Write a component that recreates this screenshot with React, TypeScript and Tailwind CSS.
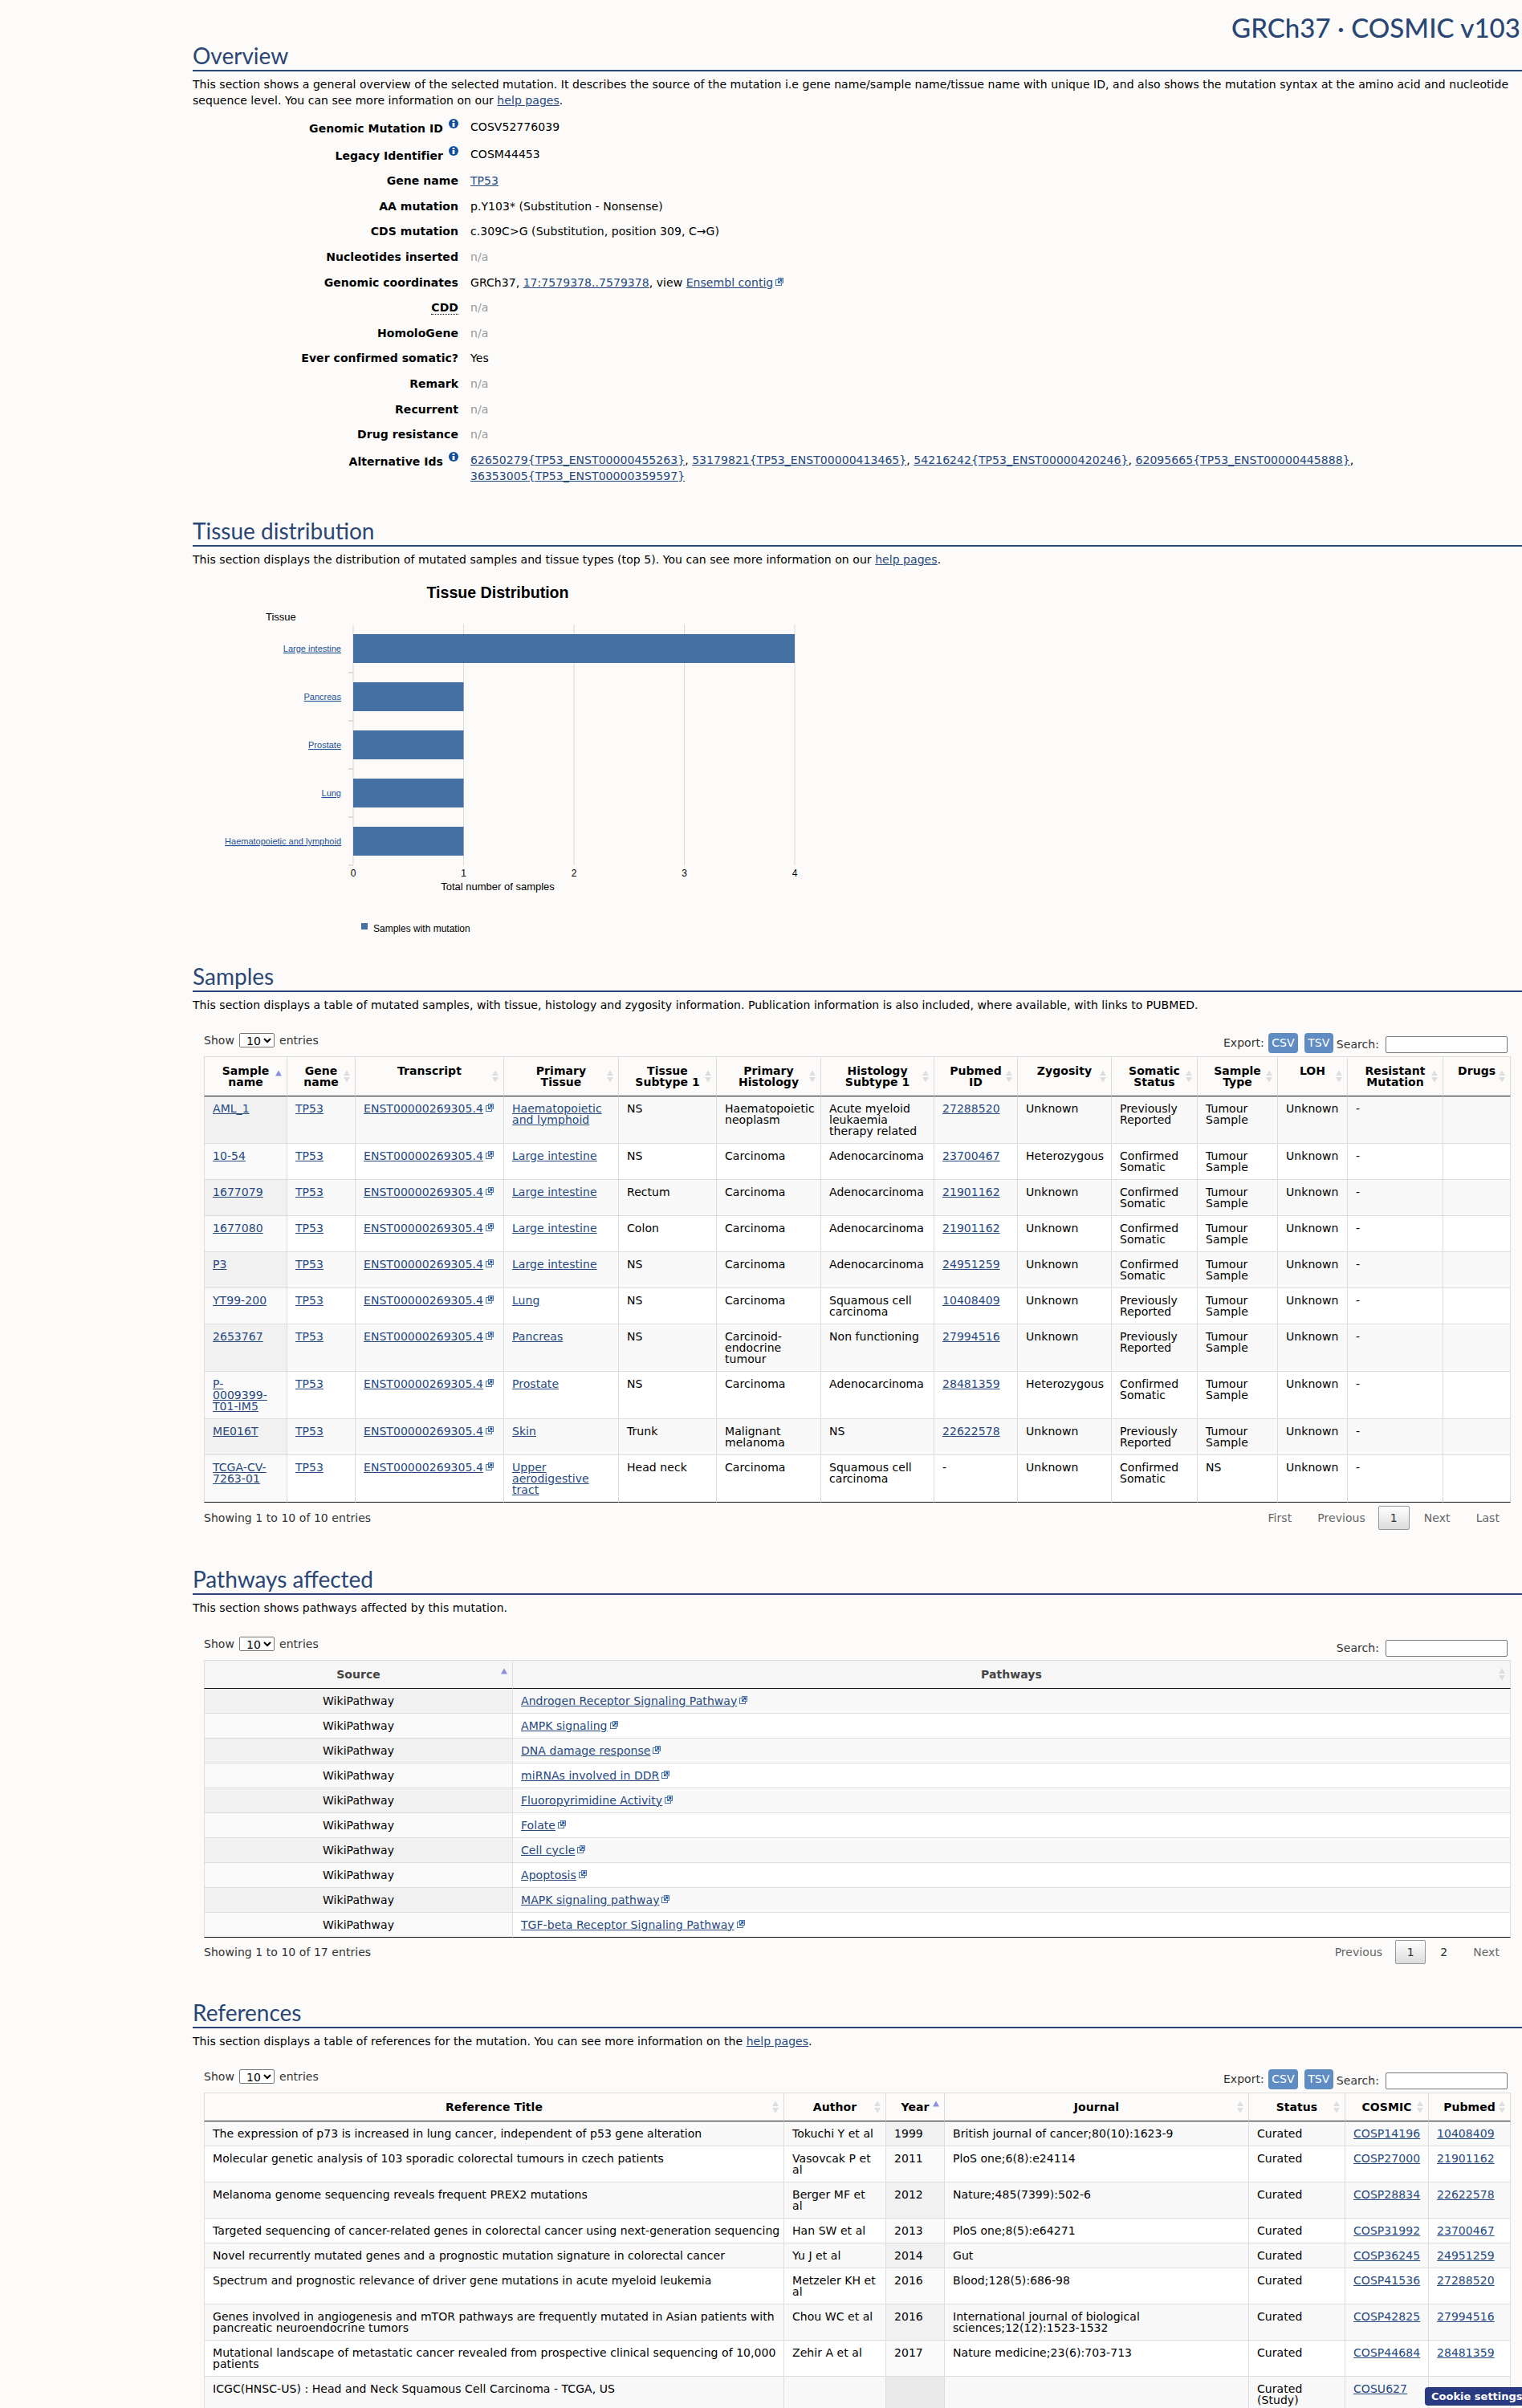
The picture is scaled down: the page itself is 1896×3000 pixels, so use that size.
import React from 'react';

// Small reusable bits
const ExtLink = () => (
  <svg viewBox="0 0 10 10" className="relative -top-[2px] ml-[3px] inline-block h-[10px] w-[10px]" fill="none">
    <rect x="0.5" y="2.5" width="7" height="7" fill="#fff" stroke="#4a76ad" />
    <rect x="3.5" y="0.5" width="6" height="6" fill="#fff" stroke="#4a76ad" />
    <path d="M3.5 6.5L7 3M4.8 2.2H7.8V5.2" stroke="#1d4f94" strokeWidth="1.2" />
  </svg>
);

const InfoIcon = () => (
  <svg viewBox="0 0 12 12" className="ml-[7px] inline-block h-[12px] w-[12px] align-[5px]">
    <circle cx="6" cy="6" r="6" fill="#0d4f9e" />
    <rect x="4.6" y="2" width="2.8" height="2" fill="#fff" />
    <rect x="4.6" y="5" width="2.8" height="5" fill="#fff" />
  </svg>
);

const A = ({ children }: { children: React.ReactNode }) => (
  <a href="#" className="text-[#26497f] underline">{children}</a>
);

const SortIcon = ({ sorted }: { sorted?: boolean }) => (
  <svg viewBox="0 0 8 15" className="absolute right-[6px] top-1/2 h-[15px] w-[8px] -translate-y-1/2">
    {sorted ? (
      <path d="M4 0L8 7H0Z" fill="#8b8fe3" />
    ) : (
      <>
        <path d="M4 0L8 6.5H0Z" fill="#dedede" />
        <path d="M4 15L8 8.5H0Z" fill="#dedede" />
      </>
    )}
  </svg>
);

const SectionTitle = ({ title }: { title: string }) => (
  <h2 className="h-[40px] border-b-2 border-[#2a4674] font-['Lato'] text-[28px] leading-[40px] tracking-normal text-[#2a4674]">{title}</h2>
);

const Export = () => (
  <>
    <span>Export:</span>
    <span className="ml-[5px] h-[25px] w-[37px] rounded-[4px] bg-[#5f8cc2] text-center leading-[25px] text-white">CSV</span>
    <span className="ml-[8px] h-[25px] w-[36px] rounded-[4px] bg-[#5f8cc2] text-center leading-[25px] text-white">TSV</span>
  </>
);

const Controls = ({ exportBtns, mt }: { exportBtns?: boolean; mt: string }) => (
  <div className={`${mt} ml-[14px] flex h-[29px] w-[1628px] justify-between text-[#333]`}>
    <div className="flex h-[18px] items-center">
      Show
      <select className="mx-[6px] h-[18px] w-[44px] rounded-[2px] border border-[#767676] bg-white pl-[4px] text-[14px] text-black">
        <option>10</option>
      </select>
      entries
    </div>
    <div className="flex h-[25px] items-center pr-[4px]">
      {exportBtns && <Export />}
      <span className="ml-[4px] mt-[4px]">Search:</span>
      <span className="ml-[8px] mt-[4px] h-[21px] w-[152px] rounded-[2px] border border-[#767676] bg-white"></span>
    </div>
  </div>
);

type Head = { label: string; w: number; sorted?: boolean };

const DataHead = ({ cols, muted }: { cols: Head[]; muted?: boolean }) => (
  <>
    <colgroup>
      {cols.map((c) => <col key={c.label} style={{ width: c.w }} />)}
    </colgroup>
    <thead>
      <tr>
        {cols.map((c, i) => (
          <th
            key={c.label}
            className={`relative border-t border-r border-b border-t-[#ddd] border-r-[#ddd] border-b-[#111] px-[18px] py-[10px] text-center align-top font-bold ${i === 0 ? 'border-l border-l-[#ddd]' : ''} ${muted ? 'bg-[#f6f6f6] text-[#444]' : ''}`}
          >
            {c.label}
            <SortIcon sorted={c.sorted} />
          </th>
        ))}
      </tr>
    </thead>
  </>
);

// one body cell; colours depend on zebra row and sorted column
const cellClass = (row: number, rows: number, col: number, sortedCol: number) => {
  const odd = row % 2 === 0;
  const sorted = col === sortedCol;
  const bg = sorted ? (odd ? 'bg-[#f1f1f1]' : 'bg-[#fafafa]') : odd ? 'bg-[#f9f9f9]' : 'bg-white';
  const bottom = row === rows - 1 ? 'border-b-[#111]' : 'border-b-[#ddd]';
  return `border-r border-b border-r-[#ddd] pl-[10px] py-[8px] align-top ${bg} ${bottom} ${col === 0 ? 'border-l border-l-[#ddd]' : ''}`;
};

const sampleCols: Head[] = [
  { label: 'Sample name', w: 104, sorted: true },
  { label: 'Gene name', w: 85 },
  { label: 'Transcript', w: 185 },
  { label: 'Primary Tissue', w: 143 },
  { label: 'Tissue Subtype 1', w: 122 },
  { label: 'Primary Histology', w: 130 },
  { label: 'Histology Subtype 1', w: 141 },
  { label: 'Pubmed ID', w: 104 },
  { label: 'Zygosity', w: 117 },
  { label: 'Somatic Status', w: 107 },
  { label: 'Sample Type', w: 100 },
  { label: 'LOH', w: 87 },
  { label: 'Resistant Mutation', w: 119 },
  { label: 'Drugs', w: 84 },
];

const PR = 'Previously Reported';
const CS = 'Confirmed Somatic';
const TS = 'Tumour Sample';
const ADENO = 'Adenocarcinoma';
const SQ = 'Squamous cell carcinoma';

const samples = [
  ['AML_1', 'Haematopoietic and lymphoid', 'NS', 'Haematopoietic neoplasm', 'Acute myeloid leukaemia therapy related', '27288520', 'Unknown', PR, TS],
  ['10-54', 'Large intestine', 'NS', 'Carcinoma', ADENO, '23700467', 'Heterozygous', CS, TS],
  ['1677079', 'Large intestine', 'Rectum', 'Carcinoma', ADENO, '21901162', 'Unknown', CS, TS],
  ['1677080', 'Large intestine', 'Colon', 'Carcinoma', ADENO, '21901162', 'Unknown', CS, TS],
  ['P3', 'Large intestine', 'NS', 'Carcinoma', ADENO, '24951259', 'Unknown', CS, TS],
  ['YT99-200', 'Lung', 'NS', 'Carcinoma', SQ, '10408409', 'Unknown', PR, TS],
  ['2653767', 'Pancreas', 'NS', 'Carcinoid-endocrine tumour', 'Non functioning', '27994516', 'Unknown', PR, TS],
  ['P-0009399-T01-IM5', 'Prostate', 'NS', 'Carcinoma', ADENO, '28481359', 'Heterozygous', CS, TS],
  ['ME016T', 'Skin', 'Trunk', 'Malignant melanoma', 'NS', '22622578', 'Unknown', PR, TS],
  ['TCGA-CV-7263-01', 'Upper aerodigestive tract', 'Head neck', 'Carcinoma', SQ, '-', 'Unknown', CS, 'NS'],
];

const pathways = [
  'Androgen Receptor Signaling Pathway',
  'AMPK signaling',
  'DNA damage response',
  'miRNAs involved in DDR',
  'Fluoropyrimidine Activity',
  'Folate',
  'Cell cycle',
  'Apoptosis',
  'MAPK signaling pathway',
  'TGF-beta Receptor Signaling Pathway',
];

const refCols: Head[] = [
  { label: 'Reference Title', w: 723 },
  { label: 'Author', w: 127 },
  { label: 'Year', w: 73, sorted: true },
  { label: 'Journal', w: 379 },
  { label: 'Status', w: 120 },
  { label: 'COSMIC', w: 104 },
  { label: 'Pubmed', w: 102 },
];

const references = [
  ['The expression of p73 is increased in lung cancer, independent of p53 gene alteration', 'Tokuchi Y et al', '1999', 'British journal of cancer;80(10):1623-9', 'Curated', 'COSP14196', '10408409'],
  ['Molecular genetic analysis of 103 sporadic colorectal tumours in czech patients', 'Vasovcak P et al', '2011', 'PloS one;6(8):e24114', 'Curated', 'COSP27000', '21901162'],
  ['Melanoma genome sequencing reveals frequent PREX2 mutations', 'Berger MF et al', '2012', 'Nature;485(7399):502-6', 'Curated', 'COSP28834', '22622578'],
  ['Targeted sequencing of cancer-related genes in colorectal cancer using next-generation sequencing', 'Han SW et al', '2013', 'PloS one;8(5):e64271', 'Curated', 'COSP31992', '23700467'],
  ['Novel recurrently mutated genes and a prognostic mutation signature in colorectal cancer', 'Yu J et al', '2014', 'Gut', 'Curated', 'COSP36245', '24951259'],
  ['Spectrum and prognostic relevance of driver gene mutations in acute myeloid leukemia', 'Metzeler KH et al', '2016', 'Blood;128(5):686-98', 'Curated', 'COSP41536', '27288520'],
  ['Genes involved in angiogenesis and mTOR pathways are frequently mutated in Asian patients with pancreatic neuroendocrine tumors', 'Chou WC et al', '2016', 'International journal of biological sciences;12(12):1523-1532', 'Curated', 'COSP42825', '27994516'],
  ['Mutational landscape of metastatic cancer revealed from prospective clinical sequencing of 10,000 patients', 'Zehir A et al', '2017', 'Nature medicine;23(6):703-713', 'Curated', 'COSP44684', '28481359'],
  ['ICGC(HNSC-US) : Head and Neck Squamous Cell Carcinoma - TCGA, US', '', '', '', 'Curated (Study)', 'COSU627', ''],
];

const overview: { label: string; info?: boolean; value: React.ReactNode; na?: boolean }[] = [
  { label: 'Genomic Mutation ID', info: true, value: 'COSV52776039' },
  { label: 'Legacy Identifier', info: true, value: 'COSM44453' },
  { label: 'Gene name', value: <A>TP53</A> },
  { label: 'AA mutation', value: 'p.Y103* (Substitution - Nonsense)' },
  { label: 'CDS mutation', value: 'c.309C>G (Substitution, position 309, C→G)' },
  { label: 'Nucleotides inserted', value: 'n/a', na: true },
  {
    label: 'Genomic coordinates',
    value: (
      <>
        GRCh37, <A>17:7579378..7579378</A>, view <A>Ensembl contig</A>
        <ExtLink />
      </>
    ),
  },
  { label: 'CDD', value: 'n/a', na: true },
  { label: 'HomoloGene', value: 'n/a', na: true },
  { label: 'Ever confirmed somatic?', value: 'Yes' },
  { label: 'Remark', value: 'n/a', na: true },
  { label: 'Recurrent', value: 'n/a', na: true },
  { label: 'Drug resistance', value: 'n/a', na: true },
  {
    label: 'Alternative Ids',
    info: true,
    value: (
      <>
        <A>62650279{'{TP53_ENST00000455263}'}</A>, <A>53179821{'{TP53_ENST00000413465}'}</A>,{' '}
        <A>54216242{'{TP53_ENST00000420246}'}</A>, <A>62095665{'{TP53_ENST00000445888}'}</A>,{' '}
        <A>36353005{'{TP53_ENST00000359597}'}</A>
      </>
    ),
  },
];

const bars = [
  { name: 'Large intestine', y: 790, x: 990 },
  { name: 'Pancreas', y: 850, x: 577.5 },
  { name: 'Prostate', y: 910, x: 577.5 },
  { name: 'Lung', y: 970, x: 577.5 },
  { name: 'Haematopoietic and lymphoid', y: 1030, x: 577.5 },
];

const TissueChart = () => (
  <svg viewBox="240 707 800 489" className="block h-[489px] w-[800px] font-['Liberation_Sans'] tracking-normal">
    {[440, 577.5, 715, 852.5, 990].map((x, i) => (
      <g key={x}>
        <line x1={x} x2={x} y1={778} y2={1078} stroke="#d9d9d9" strokeWidth="1" />
        <text x={x} y={1092} textAnchor="middle" fontSize="12" fill="#000">{i}</text>
      </g>
    ))}
    {[838, 898, 958, 1018, 1078].map((y) => (
      <line key={y} x1={434} x2={440} y1={y} y2={y} stroke="#c4c4c4" strokeWidth="1" />
    ))}
    {bars.map((b) => (
      <g key={b.name}>
        <rect x={440} y={b.y} width={b.x - 440} height={36} fill="#4470a4" />
        <text x={425} y={b.y + 22} textAnchor="end" fontSize="11" fill="#1c4f94" textDecoration="underline">{b.name}</text>
      </g>
    ))}
    <text x={620} y={745} textAnchor="middle" fontSize="19.6" fontWeight="700" fill="#000">Tissue Distribution</text>
    <text x={331} y={773} fontSize="13" fill="#000">Tissue</text>
    <text x={620} y={1109} textAnchor="middle" fontSize="13" fill="#000">Total number of samples</text>
    <rect x={450} y={1150} width={8} height={8} fill="#4470a4" />
    <text x={465} y={1161} fontSize="12" fill="#000">Samples with mutation</text>
  </svg>
);

const App = () => {
  return (
    <div className="relative h-[3000px] w-[1896px] overflow-hidden bg-[#fcfbf9] font-['DejaVu_Sans',sans-serif] text-[14px] leading-[14px] tracking-[0.05px] text-black">
      <div className="h-[49px] pt-[19px] pr-[2px] text-right font-['Lato'] text-[33px] leading-[30px] font-medium text-[#2a4674]">
        GRCh37 · COSMIC v103
      </div>

      <div className="ml-[240px]">
        {/* Overview */}
        <section>
          <SectionTitle title="Overview" />
          <p className="mt-[6px] pr-[16px] leading-[20px]">
            This section shows a general overview of the selected mutation. It describes the source of the mutation i.e gene name/sample name/tissue name with unique ID, and also shows the mutation syntax at the amino acid and nucleotide sequence level. You can see more information on our <A>help pages</A>.
          </p>
          <div className="mt-[13px] flex flex-col gap-[11.6px] leading-[20px]">
            {overview.map((row) => (
              <div key={row.label} className="flex gap-[15px]">
                <div className="w-[331px] shrink-0 text-right font-bold">
                  {row.label === 'CDD' ? <span className="border-b border-dotted border-black">CDD</span> : row.label}
                  {row.info && <InfoIcon />}
                </div>
                <div className={`w-[1292px] ${row.na ? 'text-[#999]' : ''}`}>{row.value}</div>
              </div>
            ))}
          </div>
        </section>

        {/* Tissue distribution */}
        <section className="mt-[38px]">
          <SectionTitle title="Tissue distribution" />
          <p className="mt-[6px] leading-[20px]">
            This section displays the distribution of mutated samples and tissue types (top 5). You can see more information on our <A>help pages</A>.
          </p>
          <TissueChart />
        </section>

        {/* Samples */}
        <section>
          <SectionTitle title="Samples" />
          <p className="mt-[6px] leading-[20px]">
            This section displays a table of mutated samples, with tissue, histology and zygosity information. Publication information is also included, where available, with links to PUBMED.
          </p>
          <Controls exportBtns mt="mt-[25px]" />
          <table className="ml-[14px] w-[1628px] table-fixed border-separate border-spacing-0">
            <DataHead cols={sampleCols} />
            <tbody>
              {samples.map((s, r) => {
                const cells: React.ReactNode[] = [
                  <div className="w-[78px]"><A>{s[0]}</A></div>,
                  <A>TP53</A>,
                  <>
                    <A>ENST00000269305.4</A>
                    <ExtLink />
                  </>,
                  <A>{s[1]}</A>,
                  s[2],
                  s[3],
                  s[4],
                  s[5] === '-' ? '-' : <A>{s[5]}</A>,
                  s[6],
                  s[7],
                  s[8],
                  'Unknown',
                  '-',
                  '',
                ];
                return (
                  <tr key={s[0]}>
                    {cells.map((c, i) => (
                      <td key={i} className={`${cellClass(r, samples.length, i, 0)} pr-[10px]`}>{c}</td>
                    ))}
                  </tr>
                );
              })}
            </tbody>
          </table>
          <div className="ml-[14px] flex h-[35px] w-[1628px] justify-between text-[#333]">
            <div className="pt-[12px]">Showing 1 to 10 of 10 entries</div>
            <div className="flex items-start pt-[4px] pr-[14px] text-[#666]">
              <span className="mr-[32px] pt-[8px]">First</span>
              <span className="mr-[16px] pt-[8px]">Previous</span>
              <span className="h-[30px] w-[39px] rounded-[2px] border border-[#979797] bg-gradient-to-b from-white to-[#dcdcdc] pt-[7px] text-center text-[#333]">1</span>
              <span className="ml-[18px] mr-[32px] pt-[8px]">Next</span>
              <span className="pt-[8px]">Last</span>
            </div>
          </div>
        </section>

        {/* Pathways */}
        <section className="mt-[40px]">
          <SectionTitle title="Pathways affected" />
          <p className="mt-[6px] leading-[20px]">This section shows pathways affected by this mutation.</p>
          <Controls mt="mt-[26px]" />
          <table className="ml-[14px] w-[1628px] table-fixed border-separate border-spacing-0">
            <DataHead muted cols={[{ label: 'Source', w: 385, sorted: true }, { label: 'Pathways', w: 1243 }]} />
            <tbody>
              {pathways.map((p, r) => (
                <tr key={p}>
                  <td className={`${cellClass(r, pathways.length, 0, 0)} pr-[10px] text-center`}>WikiPathway</td>
                  <td className={`${cellClass(r, pathways.length, 1, 0)} pr-[10px]`}>
                    <A>{p}</A>
                    <ExtLink />
                  </td>
                </tr>
              ))}
            </tbody>
          </table>
          <div className="ml-[14px] flex h-[34px] w-[1628px] justify-between text-[#333]">
            <div className="pt-[11px]">Showing 1 to 10 of 17 entries</div>
            <div className="flex items-start pt-[3px] pr-[14px] text-[#666]">
              <span className="mr-[16px] pt-[8px]">Previous</span>
              <span className="h-[30px] w-[38px] rounded-[2px] border border-[#979797] bg-gradient-to-b from-white to-[#dcdcdc] pt-[7px] text-center text-[#333]">1</span>
              <span className="ml-[18px] mr-[32px] pt-[8px] text-[#333]">2</span>
              <span className="pt-[8px]">Next</span>
            </div>
          </div>
        </section>

        {/* References */}
        <section className="mt-[39px]">
          <SectionTitle title="References" />
          <p className="mt-[6px] leading-[20px]">
            This section displays a table of references for the mutation. You can see more information on the <A>help pages</A>.
          </p>
          <Controls exportBtns mt="mt-[25px]" />
          <table className="ml-[14px] w-[1628px] table-fixed border-separate border-spacing-0">
            <DataHead cols={refCols} />
            <tbody>
              {references.map((s, r) => (
                <tr key={s[0]}>
                  {s.map((c, i) => {
                    // the title column gets a bit less right padding so the long title stays on one line
                    const base = cellClass(r, references.length, i, 2);
                    const cls = r === 8 && i === 2 ? base.replace('bg-[#f1f1f1]', 'bg-[#e9e9e9]') : base;
                    return (
                      <td key={i} className={`${cls} ${i === 0 ? 'pr-[3px]' : 'pr-[10px]'}`}>
                        {i >= 5 && c ? <A>{c}</A> : c}
                      </td>
                    );
                  })}
                </tr>
              ))}
            </tbody>
          </table>
        </section>
      </div>

      <div className="absolute left-[1775px] top-[2974px] h-[23px] w-[121px] rounded-l-[4px] bg-[#2a3a80] pl-[8px] text-[13px] leading-[23px] font-bold tracking-normal whitespace-nowrap text-white">
        Cookie settings
      </div>
    </div>
  );
};

export default App;
